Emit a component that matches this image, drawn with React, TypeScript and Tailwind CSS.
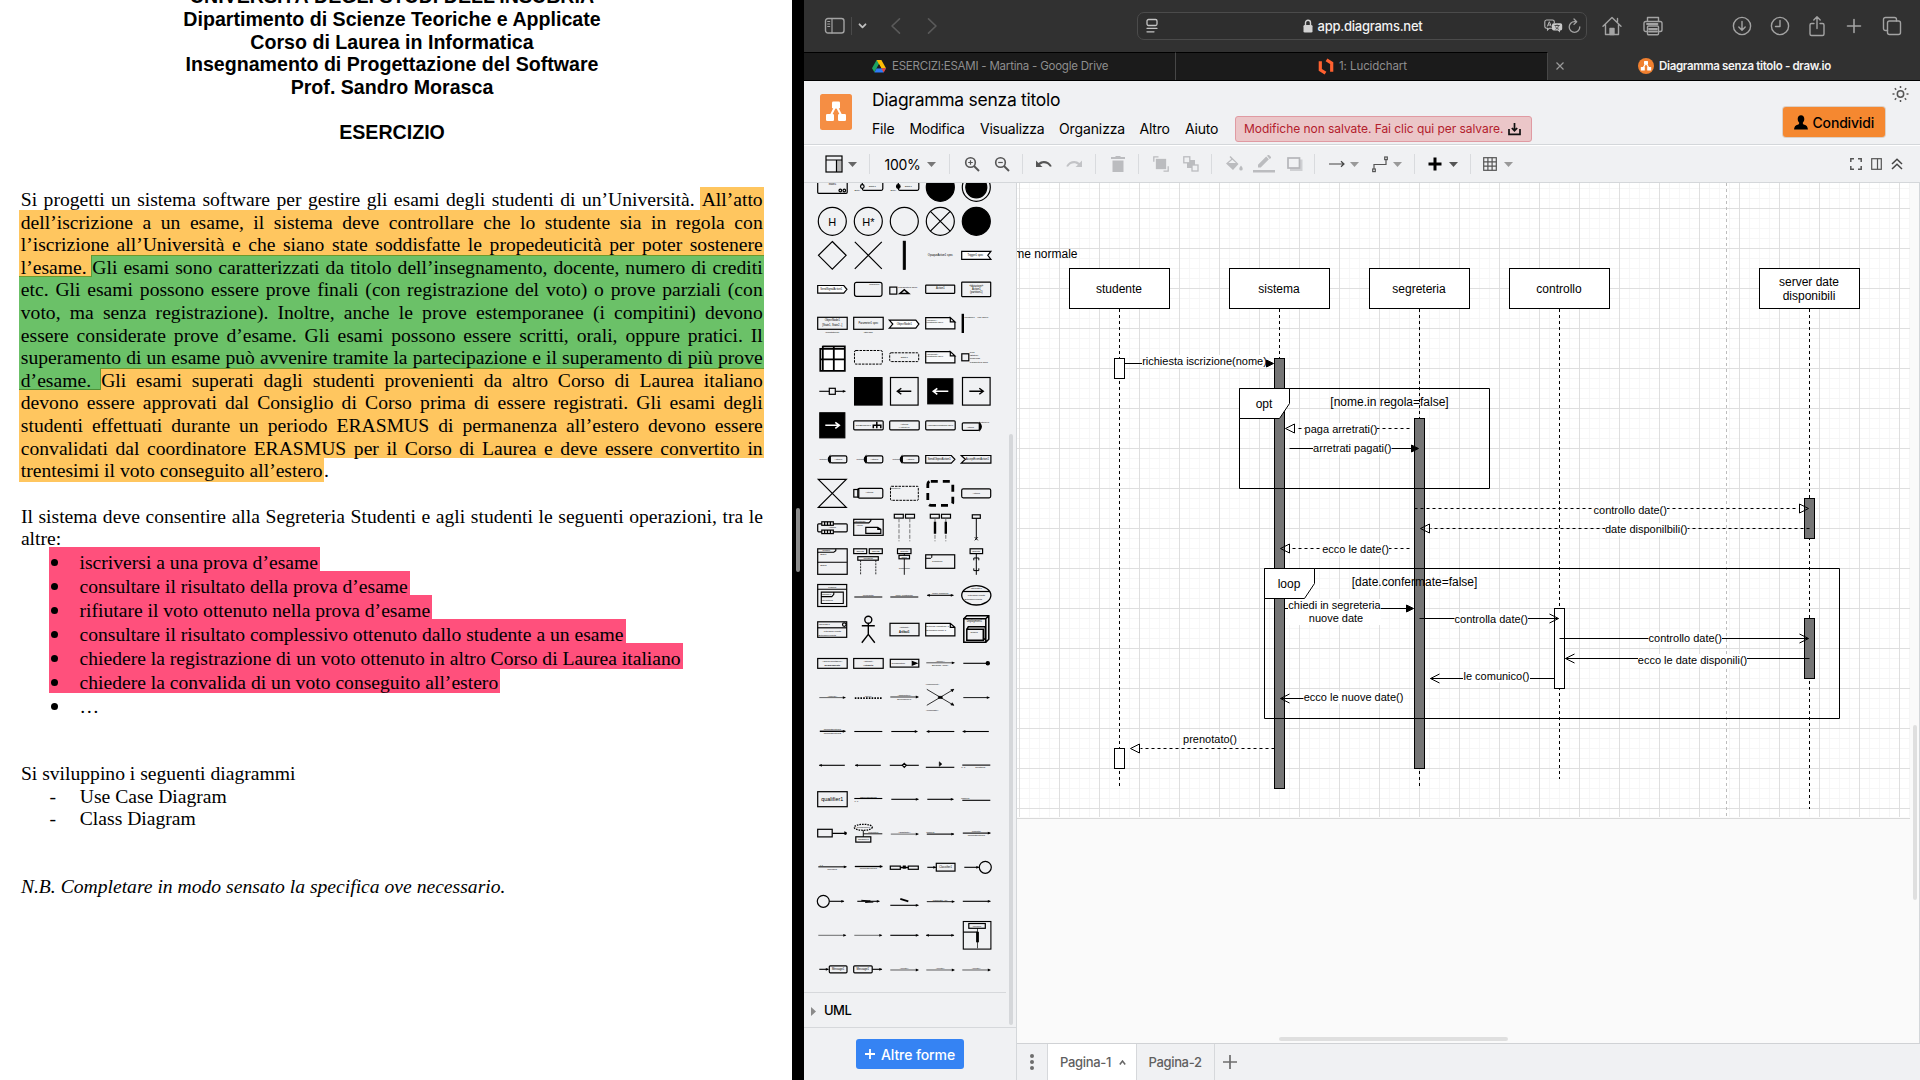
import React from "react";

/* ------------------------------------------------------------------ */
/* Document panel                                                      */
/* ------------------------------------------------------------------ */

const line = "h-[22.6px] whitespace-nowrap leading-[26.6px]";
const just = "[text-align-last:justify]";

const headings = [
  "UNIVERSITÀ DEGLI STUDI DELL’INSUBRIA",
  "Dipartimento di Scienze Teoriche e Applicate",
  "Corso di Laurea in Informatica",
  "Insegnamento di Progettazione del Software",
  "Prof. Sandro Morasca",
  "",
  "ESERCIZIO",
];

function Orange({ children }: { children: string }) {
  return <div className={`${line} ${just} bg-[#ffc65f] pl-[1.5px] pr-[1px]`}>{children}</div>;
}

function Green({ children }: { children: string }) {
  return <div className={`${line} ${just} bg-[#6bc168] pl-[1.5px] pr-[1px]`}>{children}</div>;
}

const tasks: [string, string][] = [
  ["iscriversi a una prova d’esame", "w-[271px]"],
  ["consultare il risultato della prova d’esame", "w-[361px]"],
  ["rifiutare il voto ottenuto nella prova d’esame", "w-[383px]"],
  ["consultare il risultato complessivo ottenuto dallo studente a un esame", "w-[576.5px]"],
  ["chiedere la registrazione di un voto ottenuto in altro Corso di Laurea italiano", "w-[634px]"],
  ["chiedere la convalida di un voto conseguito all’estero", "w-[451px]"],
];

function DocumentPanel() {
  return (
    <section className="h-full w-[792px] shrink-0 overflow-hidden bg-white font-['Liberation_Serif',serif] text-[19.63px] text-black">
      <div className="-mt-[14.7px] w-[784px] text-center font-['Liberation_Sans',sans-serif] font-bold">
        {headings.map((h, i) => (
          <div key={i} className="h-[22.6px] whitespace-nowrap leading-[22.6px]">{h}</div>
        ))}
      </div>

      <div className="ml-[19.3px] mt-[43.5px] w-[744.4px]">
        <div className="flex">
          <div className={`${line} ${just} w-[680.7px] pl-[1.5px] pr-[5px]`}>
            Si progetti un sistema software per gestire gli esami degli studenti di un’Università.
          </div>
          <div className={`${line} ${just} grow bg-[#ffc65f] pl-[2px] pr-[1px]`}>All’atto</div>
        </div>
        <Orange>dell’iscrizione a un esame, il sistema deve controllare che lo studente sia in regola con</Orange>
        <Orange>l’iscrizione all’Università e che siano state soddisfatte le propedeuticità per poter sostenere</Orange>
        <div className="flex">
          <div className={`${line} w-[72px] bg-[#ffc65f] pl-[1.5px] shadow-[inset_0_-1px_0_#6c9a2e]`}>l’esame.</div>
          <div className={`${line} ${just} grow border-l border-[#5b9c3a] bg-[#6bc168] pr-[1px] shadow-[inset_0_1px_0_#6c9a2e]`}>
            Gli esami sono caratterizzati da titolo dell’insegnamento, docente, numero di crediti
          </div>
        </div>
        <Green>etc. Gli esami possono essere prove finali (con registrazione del voto) o prove parziali (con</Green>
        <Green>voto, ma senza registrazione). Inoltre, anche le prove estemporanee (i compitini) devono</Green>
        <Green>essere considerate prove d’esame. Gli esami possono essere scritti, orali, oppure pratici. Il</Green>
        <Green>superamento di un esame può avvenire tramite la partecipazione e il superamento di più prove</Green>
        <div className="flex">
          <div className={`${line} w-[81.900px] border-r border-[#5b9c3a] bg-[#6bc168] pl-[1.5px] shadow-[inset_0_-1px_0_#4f8f35]`}>d’esame.</div>
          <div className={`${line} ${just} grow bg-[#ffc65f] pr-[1px] shadow-[inset_0_1px_0_#6c9a2e]`}>
            Gli esami superati dagli studenti provenienti da altro Corso di Laurea italiano
          </div>
        </div>
        <Orange>devono essere approvati dal Consiglio di Corso prima di essere registrati. Gli esami degli</Orange>
        <Orange>studenti effettuati durante un periodo ERASMUS di permanenza all’estero devono essere</Orange>
        <Orange>convalidati dal coordinatore ERASMUS per il Corso di Laurea e deve essere convertito in</Orange>
        <div className="flex">
          <div className="h-[23.6px] w-[304.7px] whitespace-nowrap bg-[#ffc65f] pl-[1.5px] leading-[26.6px]">trentesimi il voto conseguito all’estero</div>
          <span className="h-[23.6px] leading-[26.6px]">.</span>
        </div>
      </div>

      <div className="ml-[20.9px] mt-[22px] w-[742px]">
        <div className={`${line} ${just}`}>Il sistema deve consentire alla Segreteria Studenti e agli studenti le seguenti operazioni, tra le</div>
        <div className={line}>altre:</div>
      </div>

      <ul className="-mt-[2.1px] ml-[49px]">
        {tasks.map(([t, w]) => (
          <li key={t} className="h-6">
            <div className={`${w} flex h-[26.5px] items-start bg-[#ff507c]`}>
              <i className="ml-[1.7px] mt-[12px] size-[7.6px] shrink-0 rounded-full bg-black" />
              <span className="ml-[21.2px] whitespace-nowrap leading-[31px]">{t}</span>
            </div>
          </li>
        ))}
        <li className="flex h-6 items-start">
          <i className="ml-[1.7px] mt-[12px] size-[7.6px] shrink-0 rounded-full bg-black" />
          <span className="ml-[21.2px] leading-[31px]">…</span>
        </li>
      </ul>

      <div className="ml-[20.9px] mt-[48.5px] leading-[22.6px]">
        <p>Si sviluppino i seguenti diagrammi</p>
        <p className="flex"><span className="ml-[28.7px] w-[30.2px]">-</span>Use Case Diagram</p>
        <p className="flex"><span className="ml-[28.7px] w-[30.2px]">-</span>Class Diagram</p>
        <p className="mt-[45.2px] italic">N.B. Completare in modo sensato la specifica ove necessario.</p>
      </div>
    </section>
  );
}

/* ------------------------------------------------------------------ */
/* Browser chrome                                                      */
/* ------------------------------------------------------------------ */

const ic = { fill: "none", stroke: "#a3a3a3", strokeWidth: 1.4, strokeLinecap: "round" as const, strokeLinejoin: "round" as const };

function BrowserBar() {
  return (
    <div className="flex h-[52px] items-center bg-[#313131]">
      <svg className="ml-[20px] h-[18px] w-[22px]" viewBox="0 0 22 18" {...ic}>
        <rect x="1.5" y="1.5" width="18.5" height="14.5" rx="2.5" />
        <path d="M8 1.5V16M3.7 4.5h2M3.7 7h2M3.7 9.5h2" strokeWidth="1.2" />
      </svg>
      <div className="ml-[5px] h-[18px] w-px bg-[#4a4a4a]" />
      <svg className="ml-[6px] h-[6px] w-[9px]" viewBox="0 0 9 6" {...ic} strokeWidth="1.8" stroke="#c0c0c0"><path d="M1.5 1.3l3 3 3-3" /></svg>
      <svg className="ml-[23px] h-[18px] w-[11px]" viewBox="0 0 11 18" {...ic} stroke="#5a5a5a" strokeWidth="1.6"><path d="M9.5 1.8L2 9l7.500 7.200" /></svg>
      <svg className="ml-[26px] h-[18px] w-[11px]" viewBox="0 0 11 18" {...ic} stroke="#5a5a5a" strokeWidth="1.6"><path d="M1.500 1.800L9 9l-7.500 7.200" /></svg>
      <div className="ml-[198.500px] flex h-[28px] w-[450px] items-center rounded-[7px] border border-[#4b4b4b] bg-[#2e2e2e]">
        <svg className="ml-[8px] h-[16px] w-[12px]" viewBox="0 0 12 16" {...ic} stroke="#c4c4c4" strokeWidth="1.3">
          <rect x="1" y="1.500" width="10" height="6" rx="1.500" />
          <path d="M1 10.300h10M1 13.800h7" />
        </svg>
        <svg className="ml-[145px] h-[14px] w-[10px]" viewBox="0 0 10 14" fill="none">
          <rect x="0.500" y="6" width="9" height="7.500" rx="1.300" fill="#d2d2d2" />
          <path d="M2.500 6V3.800a2.500 2.500 0 015 0V6" stroke="#d2d2d2" strokeWidth="1.400" />
        </svg>
        <span className="ml-[5px] mt-[1px] w-[106px] whitespace-nowrap text-[13px] font-medium tracking-[-0.24px] text-[#f2f2f2]">app.diagrams.net</span>
        <svg className="ml-[120px] h-[14px] w-[19px]" viewBox="0 0 19 14" fill="none">
          <path d="M2.500 1h6A1.800 1.800 0 0110.300 2.800v1.500M8 9.300H5.200L3.500 11V9.300h-1A1.700 1.700 0 01.8 7.600V2.800A1.800 1.800 0 012.500 1" stroke="#b8b8b8" strokeWidth="1.100" />
          <path d="M3.300 7.500l2-4.800 2 4.800M4 6h2.700" stroke="#b8b8b8" strokeWidth="1" />
          <path d="M9.800 4.300h6.700a1.800 1.800 0 011.700 1.800v3.700a1.800 1.800 0 01-1.700 1.800h-.6v1.900l-2-1.900H9.800A1.800 1.800 0 018 9.800V6.100a1.800 1.800 0 011.800-1.800z" fill="#c9c9c9" />
          <path d="M10.500 6.500h5.200M13.100 5.500v1M11.500 10.300c1.800-.8 2.800-2.200 3-3.800M11.500 7.500c.5 1.400 1.700 2.300 3.400 2.800" stroke="#2e2e2e" strokeWidth=".8" />
        </svg>
        <svg className="ml-[5px] h-[16px] w-[13px]" viewBox="0 0 13 16" {...ic} strokeWidth="1.300">
          <path d="M11.800 9a5.300 5.300 0 11-5.300-5.300h1.800M6 1l2.700 2.700L6 6.400" />
        </svg>
      </div>
      <svg className="ml-[15px] h-[20px] w-[20px]" viewBox="0 0 20 20" {...ic}>
        <path d="M1 10.200L10 1.500l9 8.700M3.500 8.500V18.500h13V8.500M15.500 5.500V2.500" />
        <path d="M8 18.500v-6h4v6z" fill="#a3a3a3" />
      </svg>
      <svg className="ml-[21px] h-[20px] w-[20px]" viewBox="0 0 20 20" {...ic}>
        <path d="M4.500 5V1.500h11V5M4.500 15.500H2.800A1.800 1.800 0 011 13.700V7.300A1.800 1.800 0 012.800 5.500h14.400A1.800 1.800 0 0119 7.300v6.400a1.800 1.800 0 01-1.800 1.800h-1.700" />
        <rect x="4.500" y="10" width="11" height="8.700" rx="1" /><path d="M6 13h8M6 15.500h8M4 8h10.500" strokeWidth="1.800" />
      </svg>
      <svg className="ml-[69px] h-[20px] w-[20px]" viewBox="0 0 20 20" {...ic}><circle cx="10" cy="10" r="8.600" /><path d="M10 5.500v8.500M6.800 11l3.200 3.200 3.200-3.200" /></svg>
      <svg className="ml-[18px] h-[20px] w-[20px]" viewBox="0 0 20 20" {...ic}><circle cx="10" cy="10" r="8.600" /><path d="M10 4.500V10.500H5.500" /></svg>
      <svg className="ml-[18px] h-[22px] w-[18px]" viewBox="0 0 18 22" {...ic}><path d="M6 8.500H3.500A1.500 1.500 0 002 10v9a1.500 1.500 0 001.500 1.500h11A1.500 1.500 0 0016 19v-9a1.500 1.500 0 00-1.500-1.500H12M9 13.500V1.800M5.800 5L9 1.800 12.200 5" /></svg>
      <svg className="ml-[20px] h-[16px] w-[16px]" viewBox="0 0 16 16" {...ic} strokeWidth="1.600"><path d="M8 1.500v13M1.500 8h13" /></svg>
      <svg className="ml-[20px] h-[20px] w-[20px]" viewBox="0 0 20 20" {...ic}><rect x="5.500" y="5" width="13" height="13.500" rx="2" /><path d="M5.500 14.500h-2a2 2 0 01-2-2V3.500a2 2 0 012-2h9a2 2 0 012 2V5" /></svg>
    </div>
  );
}

function TabBar() {
  return (
    <div className="flex h-[29px] border-b border-black bg-[#313131] text-[11.5px]">
      <div className="flex w-[372px] items-center border-r border-t border-r-[#474747] border-t-black bg-[#1b1b1b]">
        <svg className="ml-[68px] h-[13px] w-[14px]" viewBox="0 0 14 13">
          <path d="M4.600 0h4.800l-2.400 4.200-4.600 8L0 8.200z" fill="#1ea362" />
          <path d="M4.600 0h4.800L14 8.200H9.300z" fill="#fbbc04" />
          <path d="M2.400 12.600L4.700 8.200H14l-2.400 4.400z" fill="#2f7bf5" />
          <path d="M9.300 8.200H14l-2.300 4.300z" fill="#ea4335" />
          <path d="M7 4.200l2.300 4H4.700z" fill="#1b1b1b" />
        </svg>
        <span className="ml-[6px] mt-[1px] whitespace-nowrap tracking-[-0.22px] text-[#8e8e8e]">ESERCIZI:ESAMI - Martina - Google Drive</span>
      </div>
      <div className="flex w-[371.500px] items-center border-r border-t border-r-[#474747] border-t-black bg-[#1b1b1b]">
        <svg className="ml-[142px] h-[17px] w-[16px]" viewBox="0 0 16 17" fill="none" stroke="#ff6130" strokeWidth="3.200">
          <path d="M2.300 3.200v8.600l5.200 3.400M13.700 13.800V5.200L8.500 1.800" />
        </svg>
        <span className="ml-[5px] mt-[1px] whitespace-nowrap tracking-[-0.08px] text-[#8e8e8e]">1: Lucidchart</span>
      </div>
      <div className="flex grow items-center">
        <svg className="ml-[8.500px] h-[8px] w-[8px]" viewBox="0 0 8 8" stroke="#9a9a9a" strokeWidth="1.200"><path d="M.5.500l7 7M7.500.500l-7 7" /></svg>
        <svg className="ml-[74px] h-[16px] w-[16px]" viewBox="0 0 16 16">
          <circle cx="8" cy="8" r="8" fill="#f08030" />
          <path d="M8 5L4.800 10.500M8 5l3.200 5.500" stroke="#fff" strokeWidth="1.300" />
          <rect x="6" y="3" width="4" height="3.600" rx=".5" fill="#fff" /><rect x="2.800" y="9" width="4" height="3.600" rx=".5" fill="#fff" /><rect x="9.200" y="9" width="4" height="3.600" rx=".5" fill="#fff" />
        </svg>
        <span className="ml-[5px] mt-[1px] whitespace-nowrap font-semibold tracking-[-0.33px] text-[#f4f4f4]">Diagramma senza titolo - draw.io</span>
      </div>
    </div>
  );
}

/* ------------------------------------------------------------------ */
/* Editor header and toolbar                                           */
/* ------------------------------------------------------------------ */

function Header() {
  return (
    <header className="flex h-[64px] items-start border-b border-[#d4d7da] bg-[#f0f1f3]">
      <svg className="ml-[16px] mt-[13px] h-[36px] w-[32px]" viewBox="0 0 32 36">
        <rect width="32" height="36" rx="2.500" fill="#f58e44" />
        <path d="M16 11L9.500 24M16 11l6.500 13" stroke="#fff" strokeWidth="2" />
        <rect x="12" y="7.500" width="8" height="7" rx="1.300" fill="#fff" /><rect x="6" y="20" width="8" height="7" rx="1.300" fill="#fff" /><rect x="18" y="20" width="8" height="7" rx="1.300" fill="#fff" />
      </svg>
      <div className="ml-[20px] flex flex-col">
        <div className="mt-[5px] h-[27px] whitespace-nowrap text-[17.5px] leading-[28px] tracking-[-0.27px] text-black">Diagramma senza titolo</div>
        <nav className="mt-[3px] flex h-[26px] items-center whitespace-nowrap text-[14px] tracking-[-0.22px] text-black">
          <span className="-mt-[1px] w-[37.500px]">File</span>
          <span className="-mt-[1px] w-[70.500px] tracking-[-0.3px]">Modifica</span>
          <span className="-mt-[1px] w-[79px]">Visualizza</span>
          <span className="-mt-[1px] w-[80.500px] tracking-[-0.12px]">Organizza</span>
          <span className="-mt-[1px] w-[45.500px]">Altro</span>
          <span className="-mt-[1px] w-[50px]">Aiuto</span>
          <div className="flex h-[26px] w-[297px] items-center rounded-[3px] border border-[#e09aa2] bg-[#ebc6c8] pl-[8px] text-[12px] tracking-[-0.05px] text-[#b3202c]">
            Modifiche non salvate. Fai clic qui per salvare.
            <svg className="ml-[5px] h-[14px] w-[13px]" viewBox="0 0 13 14" fill="none" stroke="#111" strokeWidth="1.700"><path d="M1 7v5.300h11V7M6.500 1v7.500M3.800 6l2.700 2.700L9.200 6" /></svg>
          </div>
        </nav>
      </div>
      <div className="ml-auto flex items-start">
        <button className="mt-[26px] flex h-[30px] w-[102.500px] items-center rounded-[3px] bg-[#f58830] pl-[11px] text-[14px] font-medium tracking-[-0.17px] text-black shadow-[0_0_0_1px_#dcd0c6]">
          <svg className="mr-[5px] h-[15px] w-[14px]" viewBox="0 0 14 15"><path d="M7 .3c2 0 3.300 1.500 3.300 3.700 0 1.700-.8 3-1.500 3.700 0 1.200.3 1.600 1.600 2 2 .7 3.200 1.300 3.500 4.800H.1c.3-3.500 1.500-4.100 3.500-4.800 1.300-.4 1.600-.8 1.600-2C4.500 7 3.700 5.700 3.700 4 3.700 1.800 5 .3 7 .3z" /></svg>
          Condividi
        </button>
        <svg className="ml-[7px] mr-[11px] mt-[5px] h-[16px] w-[17px]" viewBox="0 0 17 16" fill="none" stroke="#555" strokeWidth="1.500">
          <circle cx="8.500" cy="8" r="3.200" />
          <path d="M8.500 0v2M8.500 14v2M.5 8h2M14.500 8h2M2.800 2.300l1.400 1.400M12.800 12.300l1.400 1.400M2.800 13.700l1.400-1.400M12.800 3.700l1.400-1.400" />
        </svg>
      </div>
    </header>
  );
}

function Caret({ className }: { className: string }) {
  return <svg className={`h-[5px] w-[9px] ${className}`} viewBox="0 0 9 5"><path d="M0 0h9L4.500 5z" fill="currentColor" /></svg>;
}

function Sep({ className }: { className: string }) {
  return <div className={`h-5 w-px bg-[#d9dbde] ${className}`} />;
}

function Toolbar() {
  return (
    <div className="flex h-[38px] items-center border-b border-t border-b-[#d4d7da] border-t-white bg-[#f0f1f3]">
      <svg className="ml-[21px] h-[18px] w-[18px]" viewBox="0 0 18 18" fill="none" stroke="#000" strokeWidth="1.200"><rect x="11.500" y="5" width="5" height="12" fill="#b8b8b8" stroke="none" /><rect x="1" y="1" width="16" height="16" /><path d="M1 5h16M11.500 5v12" /></svg>
      <Caret className="ml-[5px] text-[#666]" />
      <Sep className="ml-[12px]" />
      <span className="ml-[14.500px] w-[42.500px] text-[14px] tracking-[-0.27px] text-black">100%</span>
      <Caret className="text-[#777]" />
      <Sep className="ml-[12.500px]" />
      <svg className="ml-[14px] h-[16px] w-[16px]" viewBox="0 0 16 16" fill="none" stroke="#555" strokeWidth="1.600"><circle cx="6.500" cy="6.500" r="4.800" /><path d="M10 10l5 5" strokeWidth="2" /><path d="M4.200 6.500h4.600M6.500 4.200v4.600" strokeWidth="1.200" /></svg>
      <svg className="ml-[14px] h-[16px] w-[16px]" viewBox="0 0 16 16" fill="none" stroke="#555" strokeWidth="1.600"><circle cx="6.500" cy="6.500" r="4.800" /><path d="M10 10l5 5" strokeWidth="2" /><path d="M4.200 6.500h4.600" strokeWidth="1.200" /></svg>
      <Sep className="ml-[12px]" />
      <svg className="ml-[13.500px] h-[8px] w-[16px]" viewBox="0 0 16 8"><path d="M0 .5V7h6.500L4 4.700C6.500 2.300 11.500 2.500 14 6.800l1.800-.6C13.300.5 6-.5 2.500 3z" fill="#555" /></svg>
      <svg className="ml-[14px] h-[8px] w-[16px]" viewBox="0 0 16 8"><path d="M16 .5V7H9.500L12 4.700C9.500 2.300 4.500 2.500 2 6.800L.2 6.200C2.700.5 10-.5 13.500 3z" fill="#c2c3c6" /></svg>
      <Sep className="ml-[12.500px]" />
      <svg className="ml-[15px] h-[16px] w-[14px]" viewBox="0 0 14 16" fill="#bbbcbf"><path d="M0 1h4l1-1h4l1 1h4v2H0zM1.500 4.500h11V16h-11z" /></svg>
      <Sep className="ml-[13px]" />
      <svg className="ml-[14px] h-[16px] w-[16px]" viewBox="0 0 16 16" fill="none" stroke="#bbbcbf" strokeWidth="1.300"><rect x="3.500" y="3.500" width="9" height="9" fill="#bbbcbf" /><path d="M5.500.8H.8v5M10.500 15.200h4.700v-5" /></svg>
      <svg className="ml-[14px] h-[16px] w-[16px]" viewBox="0 0 16 16" fill="none" stroke="#bbbcbf" strokeWidth="1.300"><path d="M4 4h8v8H4z" fill="#bbbcbf" stroke="none" /><rect x=".8" y=".8" width="6" height="6" fill="#f0f1f3" /><rect x="9" y="9" width="6" height="6" fill="#f0f1f3" /></svg>
      <Sep className="ml-[12px]" />
      <svg className="ml-[14px] h-[16px] w-[17px]" viewBox="0 0 17 16"><path d="M4.500 0l8 8-5.500 6L0 7.500 5.300 3 3.500 1zM2.500 7h7.500L6.300 3.800zM15 9.500c1 1.500 1.700 2.300 1.700 3.400a1.700 1.700 0 01-3.400 0c0-1.100.7-1.900 1.700-3.400z" fill="#bbbcbf" fillRule="evenodd" /></svg>
      <svg className="ml-[10px] h-[18px] w-[22px]" viewBox="0 0 22 18" fill="#bbbcbf"><path d="M0 15h22v2.600H0zM5 12.500V9.800L13.200 1.500l2.700 2.700-8.200 8.300zM14 .8L15 0h1L18 2v1l-1.300.9z" /></svg>
      <svg className="ml-[12px] h-[14px] w-[16px]" viewBox="0 0 16 14"><path d="M3 2.500h12.500V14H3z" fill="#cfd0d3" /><rect x="1" y="1" width="11.500" height="10" fill="#f0f1f3" stroke="#b5b6b9" strokeWidth="1.700" /></svg>
      <Sep className="ml-[11px]" />
      <svg className="ml-[14px] h-[8px] w-[16px]" viewBox="0 0 16 8" fill="none" stroke="#444" strokeWidth="1.200"><path d="M0 4h15M12 1.200L15 4l-3 2.800" /></svg>
      <Caret className="ml-[5px] text-[#999]" />
      <svg className="ml-[13.500px] h-[17px] w-[16px]" viewBox="0 0 16 17" fill="none" stroke="#555" strokeWidth="1.200"><path d="M2 13V8.500h12V4" /><rect x=".7" y="13" width="2.600" height="2.600" /><rect x="12.700" y="1" width="2.600" height="2.600" /></svg>
      <Caret className="ml-[5px] text-[#999]" />
      <Sep className="ml-[12px]" />
      <svg className="ml-[13px] h-[14px] w-[14px]" viewBox="0 0 14 14" stroke="#000" strokeWidth="3"><path d="M7 .5v13M.5 7h13" /></svg>
      <Caret className="ml-[7px] text-[#555]" />
      <Sep className="ml-[12px]" />
      <svg className="ml-[12px] h-[14px] w-[14px]" viewBox="0 0 14 14" fill="none" stroke="#555" strokeWidth="1.200"><rect x=".7" y=".7" width="12.600" height="12.600" /><path d="M4.900.7v12.600M9.100.7v12.600M.7 4.900h12.600M.7 9.100h12.600" /></svg>
      <Caret className="ml-[7px] text-[#999]" />
      <svg className="ml-auto h-[12px] w-[12px]" viewBox="0 0 12 12" fill="none" stroke="#555" strokeWidth="1.500"><path d="M.8 4V.8H4M8 .8h3.200V4M11.200 8v3.200H8M4 11.200H.8V8" /></svg>
      <svg className="ml-[9px] h-[12px] w-[11px]" viewBox="0 0 11 12" fill="none" stroke="#555" strokeWidth="1.200"><rect x=".7" y=".7" width="9.600" height="10.600" /><path d="M6.500.7v10.600" /></svg>
      <svg className="ml-[9px] mr-[17px] h-[12px] w-[12px]" viewBox="0 0 12 12" fill="none" stroke="#444" strokeWidth="1.500"><path d="M1 6l5-4.800L11 6M1 11l5-4.800L11 11" /></svg>
    </div>
  );
}

/* ------------------------------------------------------------------ */
/* Shape palette                                                       */
/* ------------------------------------------------------------------ */

const R = ({ x, y, w, h, r = 0, f = "none", s = 1.2, d }: { x: number; y: number; w: number; h: number; r?: number; f?: string; s?: number; d?: string }) => (
  <rect x={x} y={y} width={w} height={h} rx={r} fill={f} strokeWidth={s} strokeDasharray={d} />
);
const P = ({ d, f = "none", s = 1.2, dash }: { d: string; f?: string; s?: number; dash?: string }) => (
  <path d={d} fill={f} strokeWidth={s} strokeDasharray={dash} />
);
const T = ({ x = 0, y = 0, t, s = 2.7, a = "middle", b = false }: { x?: number; y?: number; t: string; s?: number; a?: "start" | "middle" | "end"; b?: boolean }) => (
  <text x={x} y={y} fontSize={s} textAnchor={a} stroke="none" fill="#000" fontWeight={b ? 700 : 400}>{t}</text>
);

/** Straight connector with optional heads at either end and a caption. */
const L = ({ a = -14, b = 14, y = 0, s = 1.1, head = "r", t, u, c = "#000" }: { a?: number; b?: number; y?: number; s?: number; head?: "r" | "l" | "b" | "n"; t?: string; u?: string; c?: string }) => (
  <g>
    <path d={`M${a} ${y}H${b}`} strokeWidth={s} stroke={c} />
    {(head === "r" || head === "b") && <path d={`M${b + 0.5} ${y}l-3-1.400v2.800z`} fill="#000" stroke="none" />}
    {(head === "l" || head === "b") && <path d={`M${a - 0.5} ${y}l3-1.400v2.800z`} fill="#000" stroke="none" />}
    {t && <T y={y - 1} t={t} s={2.3} />}
    {u && <T y={y + 2.800} t={u} s={2.3} />}
  </g>
);
const Grip = ({ x = -10, t = "Action1" }: { x?: number; t?: string }) => (
  <g>
    <R x={-2} y={-3.500} w={16.500} h={7} r={1.500} />
    <P d="M-2.500-3.200q-3 3.200 0 6.400z" f="#000" />
    <T x={6} y={1} t={t} s={2.4} />
    <T x={x} y={0.800} t="outcome" s={2} />
  </g>
);
const Note = ({ t, u }: { t: string; u: string }) => (
  <g>
    <P d="M-14.600-5.700H10L14.600-1.500V5.600H-14.600zM10-5.700V-1.500H14.600z" f="#f8f9fa" />
    <T x={-14} y={-2.800} t={t} a="start" s={2.3} />
    <T x={-14} y={-0.300} t={u} a="start" s={2.3} />
  </g>
);

const shapes: React.ReactNode[] = [
  <><R x={-14.600} y={-12} w={29.500} h={18} r={1} /><T y={-2} t="State1" /><circle cx="8" cy="3.200" r="1.300" /><circle cx="12" cy="3.200" r="1.300" /></>,
  <><R x={-6} y={-5.500} w={20.500} h={8.500} r={1.500} /><circle cx="-6" cy="-.8" r="1.800" fill="#f0f1f3" /><T x={4} y={0} t="State1" s={2.4} /><T x={-11} y={3.500} t="Entry" s={2.4} /></>,
  <><R x={-6} y={-5.500} w={20.500} h={8.500} r={1.500} /><circle cx="-6" cy="-.8" r="1.800" fill="#000" /><T x={4} y={0} t="State1" s={2.4} /><T x={-11} y={3.500} t="Entry" s={2.4} /></>,
  <circle r="14" fill="#000" />,
  <><circle r="14" /><circle r="10.500" fill="#000" /></>,

  <><circle r="14" /><T y={4.500} t="H" s={11} /></>,
  <><circle r="14" /><T y={4.500} t="H*" s={11} /></>,
  <circle r="14" />,
  <><circle r="14" /><P d="M-9.900-9.900L9.900 9.900M9.900-9.900L-9.900 9.900" /></>,
  <circle r="14" fill="#000" />,

  <P d="M0-13.800L13.800 0 0 13.800-13.800 0z" />,
  <P d="M-13.500-13.500l27 27M13.500-13.500l-27 27" />,
  <R x={-1} y={-14} w={2} h={28} f="#000" s={1} />,
  <T y={0.800} t="OpaqueAction1 spec" s={2.7} />,
  <><P d="M-14.600-4H14.600L11.500 0l3.100 4H-14.600z" f="#fff" /><T y={0.800} t="Trigger1 spec" x={-1} s={2.6} /></>,

  <><P d="M-14.600-3.800H11.500L14.600 0l-3.100 3.800H-14.600z" f="#fff" /><T x={-1} y={1} t="SendSignalAction1" s={2.6} /></>,
  <><R x={-13.800} y={-7} w={27.500} h={14} r={2} /><T x={6} y={-4.500} t="parameter1" s={2} /></>,
  <><R x={-14.500} y={-2.200} w={7} h={7} /><P d="M-4.500 4.300L0 .5l4.500 3.800z" s={1.500} /><T x={-6} y={-1.200} t="Parameter1 spec" a="start" s={2.500} /></>,
  <><R x={-14.600} y={-4.200} w={29} h={8.200} r={.5} /><T y={-.8} t="Action1" s={2.600} /></>,
  <><R x={-14.600} y={-7.200} w={29} h={14.500} r={.5} /><T y={-2.500} t="«datastore»" s={2.600} /><T y={.5} t="Action1" s={2.600} /><T y={3.500} t="(partition1)" s={2.600} /></>,

  <><R x={-14.600} y={-6} w={29.500} h={12} /><T y={-2} t="ObjectNode1" s={2.600} /><T y={3} t="[State1, State2...]" s={2.600} /><T y={9.500} t="(annotation1)" s={2.400} /></>,
  <><R x={-14.600} y={-6} w={29.500} h={12} /><T y={1} t="Parameter1 spec" s={2.600} /><T y={9.500} t="{stream}" s={2.400} /></>,
  <><P d="M-15-3.200H11.500L14.600.800l-3.100 4H-15l3.500-4z" f="#fff" /><T y={1.800} t="ObjectNode1" s={2.600} /></>,
  <Note t="«localPre»" u="constraint1 spec" />,
  <><path d="M-13.500-9.500V9.700" strokeWidth="2.400" /><T x={-12} y={-5} t="{joinSpec = join spec}" a="start" s={2.500} /></>,

  <><P d="M-12-8.500H12.500V13.500H-12zM-9.500-11.500V13.500M1.500-11.500V13.500M-12 2H12.500M-9.500-11H12.500v3" s={1.800} f="#fff" /></>,
  <R x={-13.800} y={-6.800} w={27.800} h={13.600} r={1.500} s={1} d="2.500 1" />,
  <><R x={-14.600} y={-4.500} w={29} h={8.800} r={1.500} s={1} d="2.500 1" /><T y={.8} t="State1" s={2.400} /></>,
  <Note t="«localPost»" u="constraint1 spec" />,
  <><R x={-14.500} y={-3.500} w={7} h={7} /><T x={-6.500} y={-4} t="Pin1" a="start" s={2.400} /><T x={-6.500} y={-1} t="[State1]" a="start" s={2.400} /><T x={-6.500} y={2} t="{ordering}" a="start" s={2.400} /><T x={-6.500} y={5.500} t="Parameter1 spec" a="start" s={2.400} /></>,

  <><L a={-13} b={13} /><R x={-3} y={-3} w={6} h={6} f="#f0f1f3" /></>,
  <R x={-13.800} y={-13.800} w={27.600} h={27.600} f="#000" s={1} />,
  <><R x={-13.800} y={-13.800} w={27.600} h={27.600} /><P d="M7 0H-7M-3-3L-7 0l4 3" s={1.400} /></>,
  <><R x={-12.500} y={-12.500} w={25} h={25} f="#000" /><path d="M8 0H-7M-3-3L-7 0l4 3" stroke="#fff" strokeWidth="1.600" /></>,
  <><R x={-13.800} y={-13.800} w={27.600} h={27.600} /><P d="M-7 0H7M3-3L7 0 3 3" s={1.400} /></>,

  <><R x={-12.500} y={-12.500} w={25} h={25} f="#000" /><path d="M-7 0H7M3-3L7 0 3 3" stroke="#fff" strokeWidth="1.600" /></>,
  <><R x={-14.600} y={-4.500} w={29.500} h={9} r={1} /><T x={-5} y={1} t="CallBehavior1" s={2.400} /><P d="M8.500-3.500V3M5 3V0h7.500v3" s={1.500} /></>,
  <><R x={-14.600} y={-4.500} w={29.500} h={9} r={1} /><T y={-.8} t="Action1" s={2.500} /><T y={2.500} t="(Activity1)" s={2.500} /></>,
  <><R x={-14.600} y={-4.500} w={29.500} h={9} r={1} /><T y={1} t="ValueSpecification1 spec" s={2.300} /></>,
  <><R x={-14} y={-2.500} w={17} h={7.500} r={1} /><P d="M3.500-2.200q3 3.500 0 7z" f="#000" /><T x={-6} y={2.300} t="Action1" s={2.300} /><T x={8} y={-2} t="outcome1" s={2.200} /></>,

  <Grip x={-9} />, <Grip x={-8} />, <Grip x={-8} />,
  <><P d="M-14.600-3.800H11L14.600 0 11 3.800H-14.600z" /><T x={-1} y={1} t="SendObjectAction1" s={2.700} /></>,
  <><P d="M-15-3.800H14.600V3.800H-15L-11 0z" /><T x={1} y={1} t="AcceptEventAction1" s={2.600} /></>,

  <P d="M-14-14H14L-14 14H14z" />,
  <><R x={-10.500} y={-5} w={25} h={9.800} r={1.500} /><R x={-14.500} y={-3.800} w={5} h={7.600} /><T x={1} y={-.8} t="Action1" s={2.500} /></>,
  <><R x={-13.800} y={-7} w={27.800} h={14} r={1} s={1} d="2.500 1" /><T x={-9} y={-4} t="«structured»" s={2} /></>,
  <R x={-12.500} y={-12} w={25} h={24} r={3} s={2.800} d="7 5" />,
  <><R x={-14.600} y={-4.500} w={29} h={9} r={1.500} /><T y={1} t="Action1" s={2.300} /></>,

  <><R x={-14.600} y={-3.500} w={29.500} h={8} r={1} /><R x={-10.500} y={-5.500} w={11.500} h={3.500} f="#fff" /><R x={-10.500} y={2.800} w={11.500} h={3.500} f="#fff" /><P d="M-7.700-5.500v3.500M-4.800-5.500v3.500M-1.900-5.500v3.500M-7.700 2.800v3.500M-4.800 2.800v3.500M-1.900 2.800v3.500" s={1.400} /><T y={.8} t="Action1" s={2.300} /></>,
  <><R x={-14.600} y={-8} w={29.500} h={16} /><P d="M-14.600-4.500H.5L2.500-6.500V-8M-2.500 0H9.500L12.500 2V6H-2.500zM9.500 0V2h3" /><T x={-8} y={-5.500} t="structured1" s={2} /><T x={-9} y={-1.500} t="Action1" s={2} /></>,
  <><R x={-10} y={-13} w={9} h={3.800} /><R x={1.200} y={-13} w={9} h={3.800} /><path d="M-5.300-9V14M5.500-9V14" stroke="#555" strokeWidth=".8" strokeDasharray="4 1.500" /></>,
  <><R x={-10} y={-13} w={9} h={3.800} /><R x={1.200} y={-13} w={9} h={3.800} /><path d="M-5.300-9V14M5.500-9V14" stroke="#555" strokeWidth=".8" strokeDasharray="4 1.500" /><path d="M-5.300-5.500V6.500M5.500-5.500V6.500" strokeWidth="2.400" /></>,
  <><R x={-4} y={-12.500} w={8} h={3.500} /><P d="M0-9V11M-1.500 10l3 3M1.500 10l-3 3" s={1} /></>,

  <><R x={-14.600} y={-12.500} w={29.500} h={25.500} /><P d="M-14.600-9H1.500L3.500-10.500V-12.500M-14.600 1H14.600" s={1.100} /><T x={-6} y={-10} t="Region1" s={2} /><T x={-9} y={-6} t="State1" s={2.200} /><T x={-9} y={4.500} t="State2" s={2.200} /></>,
  <><R x={-14.600} y={-12.500} w={13} h={4.800} /><R x={1} y={-12.500} w={13} h={4.800} /><R x={-10.500} y={-4.600} w={20.500} h={3.500} /><T x={-8} y={-9.300} t="Object1" s={2.200} /><T x={7.500} y={-9.300} t="Object2" s={2.200} /><T y={-2} t="{duration}" s={2.200} /><P d="M-7.700-1V13.500M7.500-1V13.500" s={.8} dash="2 1" /></>,
  <><R x={-6.800} y={-12.500} w={13.500} h={4.800} /><R x={-5.300} y={-6} w={10.500} h={3.500} /><P d="M0-7.500V-6M0-2.500V13.500" s={.9} /><T y={-9.300} t="Object1" s={2.300} /><T y={-3.300} t="State1" s={2} /><T y={8} t="Continuation" s={2} /></>,
  <><R x={-14.600} y={-6.500} w={29} h={13.500} /><P d="M-14.600-3H-9.500L-8.500-4V-6.500" s={1} /><T x={-3} y={1} t="Condition1" s={2.200} /></>,
  <><R x={-6.200} y={-12.500} w={12.500} h={4.800} /><T y={-9.300} t="Object1" s={2.300} /><P d="M0-7.500V13.500M-2.500-1V-3.300H2.500V-1M-2.500 7V9.300H2.500V7" s={1} /></>,

  <><R x={-14.600} y={-10.800} w={29} h={22} /><P d="M-14.600-6H14.400M-11-3.200H11V8.200H-11zM-11 1.300H-.5L1.500-1V-3.200" s={1.100} /><T y={-7.500} t="Frame1" s={2.400} /><T x={-6} y={0} t="Package1" s={2.200} /><T x={-5} y={5.500} t="Interaction1" s={2.200} /></>,
  <><path d="M-14 1.700H14" stroke="#444" strokeWidth="1.400" /><T y={.3} t="{invariant1}" s={2.200} /></>,
  <><path d="M-14 1.700H14" stroke="#444" strokeWidth="1.400" /><T y={.3} t="{Time constraint1}" s={2.200} /></>,
  <><L head="b" a={-13} b={13} t="{order number1}" /></>,
  <><ellipse rx="14.600" ry="9.700" strokeWidth="1.300" /><P d="M-13.500-3.800H13.500" /><T y={-6} t="UseCase1" s={2.300} /><T y={.3} t="extension points" s={2.400} /><T x={-3} y={4.500} t="Extension point1" s={2.400} /></>,

  <><R x={-14.600} y={-7.500} w={29} h={15.500} /><P d="M-14.600-1.500H14.400" /><circle cx="12" cy="-4.700" r="1.800" /><T x={-8} y={-4} t="UseCase1" s={2.300} /><T y={2.500} t="extension points" s={2.400} /><T x={-5} y={6.500} t="Extension point1" s={2.400} /></>,
  <><circle cy="-9.500" r="3.500" strokeWidth="1.400" /><P d="M0-6V5M-6.500-3.500H6.500M-6.500 13.500L0 5l6.500 8.500" s={1.400} /></>,
  <><R x={-14.300} y={-6} w={29} h={12.500} /><T y={-1.500} t="«artifact»" s={2.500} /><T y={3.500} t="Artifact1" s={2.600} b /></>,
  <><P d="M-14.600-6H10L14.600-2V6.500H-14.600zM10-6V-2H14.600" f="#f8f9fa" /><T x={-14} y={-2.500} t="External condition: 1" a="start" s={2.500} /><T x={-14} y={1.500} t="Extension point: 1" a="start" s={2.500} /></>,
  <><P d="M-12.500-10.500H9.500V13H-12.500zM-12.500-10.500L-9.500-13.500H12.500V10L9.500 13M9.500-10.500L12.500-13.500M-9.500 0H7V11H-9.500zM-9.500 0L-8-2.500H9V9L7 11" s={1.500} /><T x={-2} y={-7.500} t="Deployment1" s={2.600} /><T x={-2} y={4} t="Node1" s={2.500} /></>,

  <><R x={-14.600} y={-4.800} w={29.500} h={9.800} /><T y={-1.300} t="«deploymentSpec»" s={2.400} /><T y={3} t="Deployment1" s={2.500} b /></>,
  <><R x={-14.600} y={-4.800} w={29.500} h={9.800} /><T y={-1.300} t="«artifact»" s={2.400} /><T y={3} t="Artifact1" s={2.500} b /></>,
  <><R x={-14} y={-4} w={28.500} h={7.800} /><P d="M8-1.800L12.500 0 8 1.800z" f="#000" /><T x={-6} y={.8} t="Collaboration" s={2.300} /></>,
  <L y={-.5} t="«deploy»" u="Binding1 «bind»" s={.9} c="#444" />,
  <><L a={-13} b={12} y={0} head="n" /><circle cx="11.500" r="1.600" fill="#000" /></>,

  <L a={-13} b={13} y={.3} t="«include»" s={.9} c="#555" />,
  <><path d="M-13.500.800H13.500" strokeDasharray="1.600 1.200" strokeWidth="1.600" /><T y={0} t="«derive»" s={2} /></>,
  <L y={-.3} t="«abstraction»" u="Dependency1" s={.8} />,
  <><P d="M-13.500-8L13.500 8M13.500-8L-13.500 8" s={.8} /><P d="M13.500-8l-3 .3 1.500 2.300zM13.500 8l-3-.3 1.500-2.300zM-2-1h4v2.200h-4z" f="#000" s={.5} /><T x={-8} y={-12} t="«component»" s={2.300} /><T x={-8} y={14} t="«composite»" s={2.300} /></>,
  <L a={-13} b={13} y={.3} s={.9} />,

  <L a={-12.500} b={13} t="InformationItem1" u="InformationItem2" s={1.400} />, <L head="n" y={.2} />, <L a={-13} b={13} y={.2} />, <L head="l" a={-13.500} y={.2} />, <L head="l" a={-13.500} b={12.500} y={.2} />,
  <L head="l" a={-13} b={12.500} />, <L head="l" a={-13} b={12.500} />, <><L head="n" a={-14.500} b={14.500} /><P d="M0-2L2 0 0 2-2 0z" f="#f0f1f3" /></>, <><L head="n" y={2} a={-14.500} /><P d="M-1-3.500L1.500-1.200-1 1z" f="#000" s={.6} /></>, <><L head="n" y={-.2} /><T x={-13} y={3} t="0..1" s={2.400} /><T x={4} y={2.500} t="Relation1" s={2.400} /></>,
  <><R x={-14.600} y={-7.600} w={29.500} h={15} /><T y={2} t="qualifier1" s={5.400} /></>, <><L head="n" y={-.8} t="associationEnd1" /><T x={-12} y={2.500} t="0..1" s={2.200} /></>, <L a={-13} />, <L a={-13} b={13} />, <><L head="n" y={1} /><T x={-11} y={0} t="{name1}" s={2.300} /></>,
  <><R x={-14.600} y={-4} w={14.500} h={7.600} /><P d="M0 0H14.500M12-1.500L14.500 0M14 1.200l-2-.5" /></>, <><ellipse cx="-5" cy="-6" rx="9" ry="3" strokeDasharray="1.600 1" strokeWidth="1.300" /><R x={-12.500} y={3.500} w={15} h={5.300} /><P d="M-5-3V3.500M-5 .500H14" s={.9} /><T x={-5} y={-5} t="Collaboration1" s={2} /><T x={-5} y={7} t="Classifier1" s={2.300} /><T x={5} y={0} t="connector1" s={2} /></>, <L a={-13.500} y={.8} t="«substitute»" s={.8} c="#444" />, <><L a={-13.500} b={13.500} y={.8} /><T x={-10} y={-.3} t="{name1}" s={2.200} /></>, <L a={-13.500} y={-.2} t="{object1}" u="InformationItem1" />,
  <><L a={-14} y={-.5} u="provider1" s={1.300} c="#333" /><T x={-11} y={-1.300} t="0..1" s={2} /></>, <L a={-13.500} y={-.8} u="InformationItem1" s={1.300} />, <><R x={-14} y={-1.200} w={10} h={3.200} /><R x={4} y={-1.200} w={10} h={3.200} /><P d="M-4 .2H4M-.8-1h1.600v1.800h-1.600z" s={1.500} /></>, <><R x={-4} y={-4} w={18.700} h={7.800} /><L a={-13} b={-4.500} y={0} /><T x={5.300} y={1} t="Classifier1" s={2.700} /></>, <><circle cx="9" r="6" /><L a={-12} b={2.500} y={0} /></>,
  <><circle cx="-9" r="6" /><L a={-3} b={11.500} y={0} /></>, <><L a={-11} b={11} /><P d="M-7-1L2-.300-3 1 5 .8" s={1} /></>, <><L a={-14} y={4} /><P d="M-4-2.500L4 0" s={1.800} /></>, <L a={-13.500} y={.3} t="Manifest1 «m»" c="#333" />, <L a={-13.500} y={0} />,
  <L a={-14} b={13.500} s={.7} c="#333" />, <L a={-14} b={13.500} s={.7} c="#333" />, <L a={-14} />, <L a={-14} b={13.500} head="b" />, <><R x={-13} y={-13.800} w={27.600} h={27.600} s={1.100} /><R x={-7.500} y={-11.800} w={16.500} h={4.800} /><T x={.8} y={-8.500} t="Lifeline1" s={2.300} /><P d="M-13-3.200H1.200" /><P d="M1.200-7V13" s={.7} /><path d="M1.200-3.500V7" strokeWidth="2.800" /></>,
  <><R x={-3} y={-3.500} w={17.700} h={7} r={1} /><L a={-13} b={-4} y={0} /><T x={5.800} y={1} t="Message1" s={2.700} /></>, <><R x={-14.600} y={-3.500} w={18.500} h={7} r={1} /><L a={4} b={13.500} y={0} /><T x={-5.500} y={1} t="Message1" s={2.700} /></>, <L a={-14} y={.7} t="«create»" s={.8} c="#333" />, <L a={-14} y={.7} t="«create»" s={.8} c="#333" />, <L a={-14} y={.7} t="«create»" s={.8} c="#333" />,
];

function Palette() {
  return (
    <aside className="flex w-[212px] shrink-0 flex-col bg-[#f0f1f3]">
      <div className="flex h-[844px] overflow-hidden">
        <div className="w-[202px]">
          <div className="-mt-[13px] ml-[10px] grid w-[180px] grid-cols-5">
            {shapes.map((s, i) => (
              <svg key={i} className="h-[34px] w-[36px]" viewBox="-18.300 -17.300 36 34" overflow="visible" fill="none" stroke="#000" strokeWidth="1.200" fontFamily="Liberation Sans">
                {s}
              </svg>
            ))}
          </div>
          <div className="mt-[6px] h-px bg-[#d6d8db]" />
          <div className="flex h-[36px] items-center pl-[7px]">
            <svg className="h-[9px] w-[5px]" viewBox="0 0 5 9"><path d="M0 0l5 4.500L0 9z" fill="#8a8a8a" /></svg>
            <span className="ml-[8px] text-[13px] font-medium tracking-[-0.5px] text-black">UML</span>
          </div>
        </div>
        <div className="ml-[3px] mt-[251px] h-[591px] w-[4px] rounded-full bg-[#d5d7da]" />
      </div>
      <div className="grow border-t border-[#d6d8db]">
        <button className="ml-[52px] mt-[11px] flex h-[30px] w-[108px] items-center rounded-[3px] bg-[#3583f3] pl-[9px] text-[14px] font-medium tracking-[-0.1px] text-white">
          <svg className="mr-[6px] h-[10px] w-[10px]" viewBox="0 0 10 10" stroke="#fff" strokeWidth="1.800"><path d="M5 0v10M0 5h10" /></svg>
          Altre forme
        </button>
      </div>
    </aside>
  );
}

/* ------------------------------------------------------------------ */
/* Sequence diagram                                                    */
/* ------------------------------------------------------------------ */

const participants: [string, number, number][] = [
  ["studente", 1119.5, 786],
  ["sistema", 1279.5, 788],
  ["segreteria", 1419.5, 786],
  ["controllo", 1559.5, 779],
  ["server date|disponibili", 1809.5, 809],
];

type Head = "solid" | "hollow" | "open";

function Message({ from, to, y, head, dashed, label, lx, ly, w }: { from: number; to: number; y: number; head: Head; dashed?: boolean; label: string; lx: number; ly: number; w: number }) {
  const d = to > from ? -1 : 1;
  const end = head === "solid" ? to + d * 7 : head === "hollow" ? to + d * 11 : to + d;
  return (
    <g>
      <path d={`M${from} ${y}H${end}`} stroke="#000" strokeDasharray={dashed ? "3 3" : undefined} />
      <rect x={lx} y={ly - 6.5} width={w} height={12.5} fill="#fff" />
      {head === "solid" && <path d={`M${to + d} ${y}l${d * 7}-3.500v7z`} fill="#000" stroke="#000" />}
      {head === "hollow" && <path d={`M${to + d} ${y}l${d * 9}-4.500v9z`} fill="none" stroke="#000" />}
      {head === "open" && <path d={`M${to + d * 10} ${y - 4.5}l${-d * 9} 4.500l${d * 9} 4.500`} fill="none" stroke="#000" />}
      <text x={lx + w / 2} y={ly + 3.5} fontSize="11" textAnchor="middle">{label}</text>
    </g>
  );
}

function Bar({ x, y, h, fill }: { x: number; y: number; h: number; fill: string }) {
  return <rect x={x} y={y} width="10" height={h} fill={fill} stroke="#000" />;
}

function Diagram() {
  return (
    <svg className="block h-[634px] w-[893px]" viewBox="1017 183 893 634" fontFamily="Liberation Sans, sans-serif" fill="#000">
      <defs>
        <pattern id="minor" x="1019" y="208" width="10" height="10" patternUnits="userSpaceOnUse"><path d="M0 .5H10M.5 0V10" stroke="#f6f6f6" fill="none" /></pattern>
        <pattern id="major" x="1019" y="208" width="40" height="40" patternUnits="userSpaceOnUse"><path d="M0 .5H40M.5 0V40" stroke="#dfdfdf" fill="none" /></pattern>
      </defs>
      <rect x="1017" y="183" width="893" height="634" fill="#fff" />
      <rect x="1017" y="183" width="893" height="634" fill="url(#minor)" />
      <rect x="1017" y="183" width="893" height="634" fill="url(#major)" />
      <path d="M1726.5 183V817" stroke="#bdbdbd" strokeDasharray="3 3" />

      <text x="1077.500" y="258" fontSize="12" textAnchor="end">me normale</text>
      {participants.map(([name, x, end]) => {
        const rows = name.split("|");
        return (
          <g key={name}>
            <path d={`M${x} 309V${end}`} stroke="#000" strokeDasharray="3 3" />
            <rect x={x - 50} y="268.5" width="100" height="40" fill="#fff" stroke="#000" />
            {rows.map((r, i) => (
              <text key={r} x={x - 0.5} y={rows.length === 1 ? 293 : 286 + i * 14} fontSize="12" textAnchor="middle">{r}</text>
            ))}
          </g>
        );
      })}

      <Bar x={1114.5} y={358.5} h={20} fill="#fff" />
      <Bar x={1114.5} y={748.5} h={20} fill="#fff" />
      <Bar x={1274.5} y={358.5} h={430} fill="#757575" />
      <Bar x={1414.5} y={418.5} h={350} fill="#757575" />
      <Bar x={1554.5} y={608.5} h={80} fill="#fff" />
      <Bar x={1804.5} y={498.5} h={40} fill="#757575" />
      <Bar x={1804.5} y={618.5} h={60} fill="#757575" />

      <path d="M1239.500 388.500h250v100h-250z" fill="none" stroke="#000" />
      <path d="M1239.500 388.500h50v15l-10 15h-40z" fill="#fff" stroke="#000" />
      <text x="1264" y="408" fontSize="12" textAnchor="middle">opt</text>
      <text x="1389.500" y="406" fontSize="12" textAnchor="middle">[nome.in regola=false]</text>

      <path d="M1264.500 568.500h575v150h-575z" fill="none" stroke="#000" />
      <path d="M1264.500 568.500h50v15l-10 15h-40z" fill="#fff" stroke="#000" />
      <text x="1289" y="588" fontSize="12" textAnchor="middle">loop</text>
      <text x="1414.500" y="586" fontSize="12" textAnchor="middle">[date.confermate=false]</text>

      <Message from={1124.5} to={1274.5} y={363.5} head="solid" label="richiesta iscrizione(nome)" lx={1142} ly={361.5} w={125} />
      <Message from={1409.5} to={1284.5} y={428.5} head="hollow" dashed label="paga arretrati()" lx={1305} ly={429.5} w={72} />
      <Message from={1289.5} to={1419.5} y={448.5} head="solid" label="arretrati pagati()" lx={1313} ly={448.5} w={78.5} />
      <Message from={1414.5} to={1809.5} y={508.5} head="hollow" dashed label="controllo date()" lx={1593.5} ly={510.5} w={73.5} />
      <Message from={1809.5} to={1419.5} y={528.5} head="hollow" dashed label="date disponilbili()" lx={1605} ly={529.5} w={82.5} />
      <Message from={1409.5} to={1279.5} y={548.5} head="hollow" dashed label="ecco le date()" lx={1322} ly={549.5} w={67} />

      <path d="M1284.500 608.500H1407" stroke="#000" />
      <path d="M1413.500 608.500l-7-3.500v7z" stroke="#000" />
      <rect x="1288" y="599" width="93" height="26" fill="#fff" />
      <text x="1334.500" y="609" fontSize="11" textAnchor="middle">chiedi in segreteria</text>
      <text x="1336" y="622" fontSize="11" textAnchor="middle">nuove date</text>

      <Message from={1419.5} to={1559.5} y={618.5} head="open" label="controlla date()" lx={1454.5} ly={619.5} w={73.5} />
      <Message from={1559.5} to={1809.5} y={638.5} head="open" label="controllo date()" lx={1648.5} ly={638.5} w={73.5} />
      <Message from={1809.5} to={1564.5} y={658.5} head="open" label="ecco le date disponili()" lx={1638} ly={660.5} w={109} />
      <Message from={1554.5} to={1429.5} y={678.5} head="open" label="le comunico()" lx={1463} ly={676.5} w={67} />
      <Message from={1390} to={1279.5} y={698.5} head="open" label="ecco le nuove date()" lx={1303.5} ly={697.5} w={100} />
      <Message from={1274.5} to={1129.5} y={748.5} head="hollow" dashed label="prenotato()" lx={1183} ly={739.5} w={54} />
    </svg>
  );
}

function Canvas() {
  return (
    <main className="flex grow flex-col border-l border-[#d4d7da]">
      <div className="flex h-[860px] border-r border-[#d4d7da] bg-[#fafafa]">
        <div className="flex w-[893px] flex-col">
          <Diagram />
          <div className="h-[2px] border-b border-[#d9d9d9] bg-[#fbfbfb]" />
          <div className="mt-auto mb-[2px] ml-[262px] h-[4px] w-[229px] rounded-full bg-[#dfdfdf]" />
        </div>
        <div className="ml-[3px] mt-[542px] h-[175px] w-[4px] rounded-full bg-[#dfdfdf]" />
      </div>
      <footer className="flex grow items-stretch border-t border-[#d0d2d5] bg-[#f0f1f3] text-[13px] font-medium text-[#5f5f5f]">
        <div className="flex w-[31px] flex-col items-center justify-center gap-[2px] border-r border-[#d6d8db]">
          <i className="size-[4px] rounded-full bg-[#6d6d6d]" />
          <i className="size-[4px] rounded-full bg-[#6d6d6d]" />
          <i className="size-[4px] rounded-full bg-[#6d6d6d]" />
        </div>
        <div className="flex w-[89px] items-center border-r border-[#d6d8db] bg-white pl-[12px] pt-[1px] tracking-[-0.32px]">
          Pagina-1
          <svg className="ml-[8px] h-[5px] w-[7px]" viewBox="0 0 7 5" fill="none" stroke="#666" strokeWidth="1.500"><path d="M.8 4.500L3.500 1l2.700 3.500" /></svg>
        </div>
        <div className="flex w-[78px] items-center border-r border-[#d6d8db] pl-[11.500px] pt-[1px] tracking-[-0.34px]">Pagina-2</div>
        <svg className="ml-[8px] h-[14px] w-[14px] self-center" viewBox="0 0 14 14" stroke="#6d6d6d" strokeWidth="1.700"><path d="M7 0v14M0 7h14" /></svg>
      </footer>
    </main>
  );
}

export default function App() {
  return (
    <div className="flex h-[1080px] w-[1920px] overflow-hidden bg-black">
      <DocumentPanel />
      <div className="flex w-3 shrink-0 items-start justify-center bg-black">
        <div className="mt-[508px] h-[64px] w-[4px] rounded-full bg-[#8a8a8a]" />
      </div>
      <div className="flex w-[1116px] flex-col font-['Inter',sans-serif]">
        <BrowserBar />
        <TabBar />
        <Header />
        <Toolbar />
        <div className="flex grow">
          <Palette />
          <Canvas />
        </div>
      </div>
    </div>
  );
}
